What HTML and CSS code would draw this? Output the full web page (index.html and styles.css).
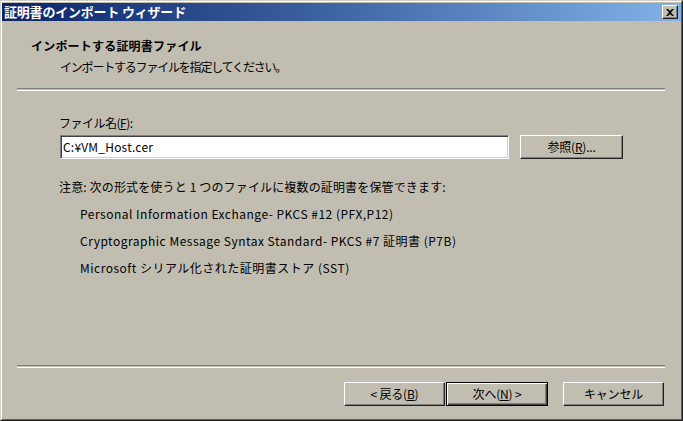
FILE: index.html
```html
<!DOCTYPE html>
<html lang="ja">
<head>
<meta charset="utf-8">
<link rel="stylesheet" href="styles.css">
</head>
<body>
<div class="window">
  <div class="titlebar">
    <span class="title">証明書のインポート ウィザード</span>
    <span class="close"><svg width="8" height="7" viewBox="0 0 8 7"><path d="M0 0h2l2 2 2-2h2L5 3.5 8 7H6L4 5 2 7H0l3-3.5z" fill="#000"/></svg></span>
  </div>
  <div class="header">
    <div class="h-title">インポートする証明書ファイル</div>
    <div class="h-sub">インポートするファイルを指定してください。</div>
  </div>
  <div class="sep"></div>
  <div class="body">
    <div class="label">ファイル名(<u>F</u>):</div>
    <div class="filerow">
      <div class="input">C:¥VM_Host.cer</div>
      <div class="btn browse">参照(<u>R</u>)...</div>
    </div>
    <div class="note">注意: 次の形式を使うと 1 つのファイルに複数の証明書を保管できます:</div>
    <ul class="list">
      <li>Personal Information Exchange- PKCS #12 (PFX,P12)</li>
      <li>Cryptographic Message Syntax Standard- PKCS #7 証明書 (P7B)</li>
      <li>Microsoft シリアル化された証明書ストア (SST)</li>
    </ul>
  </div>
  <div class="footer">
    <div class="sep"></div>
    <div class="buttons">
      <div class="btn">&lt; 戻る(<u>B</u>)</div>
      <div class="btn default">次へ(<u>N</u>) &gt;</div>
      <div class="btn cancel">キャンセル</div>
    </div>
  </div>
</div>
</body>
</html>
```

FILE: styles.css
```css
html, body {
  margin: 0;
  padding: 0;
  background: #c1bdb1;
}
body {
  font-family: "Noto Sans CJK JP", "DejaVu Sans", sans-serif;
  font-size: 12px;
  color: #000;
}
.window {
  width: 683px;
  height: 421px;
  box-sizing: border-box;
  background: #c1bdb1;
  border: 1px solid;
  border-color: #d4d0c8 #202020 #202020 #d4d0c8;
  display: flex;
  flex-direction: column;
  position: relative;
}
.window::before {
  content: "";
  position: absolute;
  inset: 0;
  border: 1px solid;
  border-color: #ffffff #606060 #606060 #ffffff;
  pointer-events: none;
}
.titlebar {
  margin: 2px 1px 0 1px;
  height: 18px;
  background: linear-gradient(to right, #0a246a 0%, #3a5f9e 45%, #82b2e8 100%);
  display: flex;
  align-items: center;
  justify-content: space-between;
  padding: 0 3px 0 2px;
}
.title {
  color: #fff;
  font-weight: bold;
  font-size: 13px;
  line-height: 18px;
  letter-spacing: -0.2px;
}
.close {
  width: 16px;
  height: 14px;
  box-sizing: border-box;
  background: #c1bdb1;
  border: 1px solid;
  border-color: #ffffff #202020 #202020 #ffffff;
  box-shadow: inset -1px -1px 0 #808080;
  display: flex;
  align-items: center;
  justify-content: center;
}
.header {
  padding: 17px 0 0 30px;
}
.h-title {
  font-weight: bold;
  line-height: 16px;
  letter-spacing: 0.2px;
}
.h-sub {
  margin: 6px 0 0 29px;
  line-height: 14px;
  letter-spacing: -1.2px;
}
.sep {
  margin: 14px 17px 0 16px;
  height: 1px;
  border-top: 1px solid #808080;
  border-bottom: 1px solid #ffffff;
}
.body {
  padding-left: 59px;
}
.label {
  margin: 25px 0 0 -1px;
  line-height: 14px;
  letter-spacing: -0.5px;
}
.filerow {
  display: flex;
  margin-top: 5px;
}
.input {
  width: 449px;
  height: 24px;
  box-sizing: border-box;
  background: #fff;
  border: 1px solid;
  border-color: #808080 #ffffff #ffffff #808080;
  box-shadow: inset 1px 1px 0 #404040, inset -1px -1px 0 #d4d0c8;
  padding: 0 2px;
  line-height: 22px;
  letter-spacing: 0.2px;
}
.btn {
  width: 101px;
  height: 24px;
  box-sizing: border-box;
  background: #c1bdb1;
  border: 1px solid;
  border-color: #ffffff #202020 #202020 #ffffff;
  box-shadow: inset -1px -1px 0 #808080;
  display: flex;
  align-items: center;
  justify-content: center;
  line-height: 14px;
  letter-spacing: -0.2px;
  white-space: pre;
}
.browse {
  margin-left: 11px;
  width: 103px;
}
.note {
  margin: 21px 0 0 -1px;
  line-height: 14px;
  letter-spacing: 0.15px;
}
.list {
  list-style: none;
  margin: 13px 0 0 0;
  padding: 0 0 0 20px;
  display: flex;
  flex-direction: column;
  gap: 13px;
}
.list li {
  line-height: 14px;
  letter-spacing: 0.5px;
}
.footer {
  margin-top: auto;
  padding-bottom: 14px;
}
.footer .sep {
  margin-top: 0;
}
.buttons {
  display: flex;
  justify-content: flex-end;
  margin: 14px 18px 0 0;
  height: 24px;
}
.btn.default {
  margin-left: 1px;
  border-color: #000;
  box-shadow: inset 1px 1px 0 #fff, inset -1px -1px 0 #404040, inset -2px -2px 0 #808080;
  width: 102px;
}
.btn.cancel {
  margin-left: 15px;
}
u {
  text-decoration: underline;
  text-underline-offset: 1px;
}
```
